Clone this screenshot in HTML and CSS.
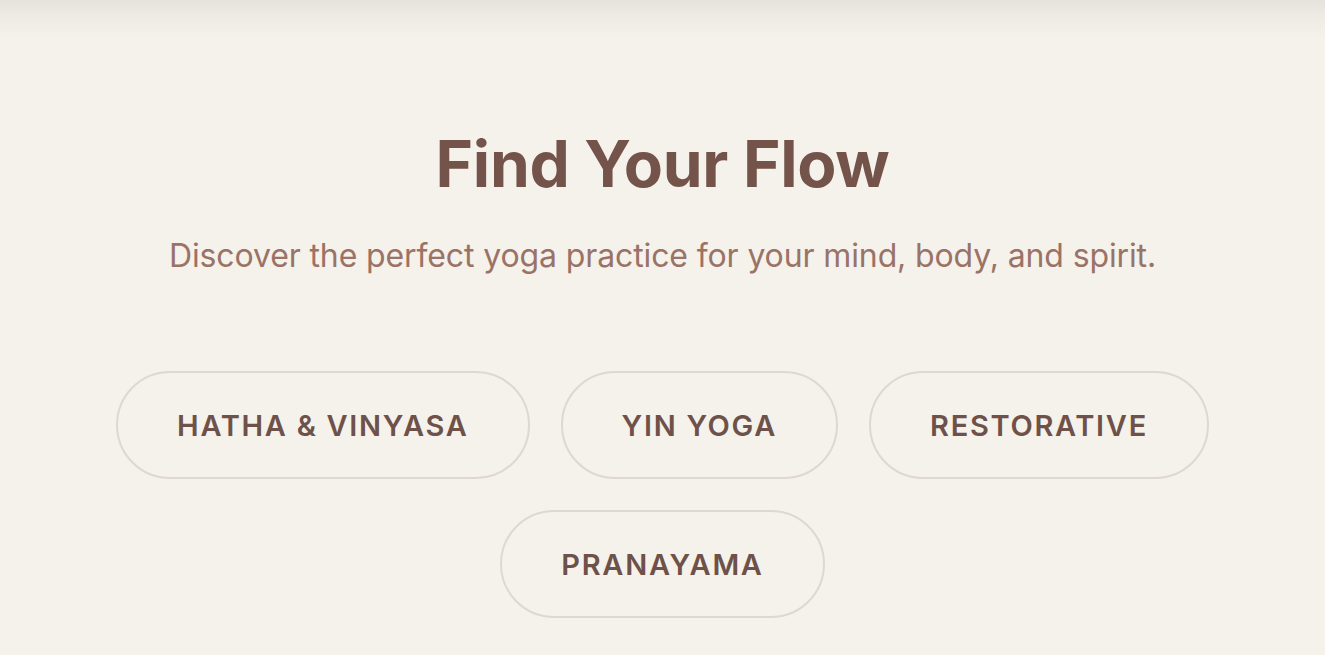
FILE: index.html
```html
<!DOCTYPE html>
<html lang="en">
<head>
<meta charset="utf-8">
<title>Find Your Flow</title>
<link rel="stylesheet" href="styles.css">
</head>
<body>
<div class="topshade"></div>
<section class="hero">
  <h1 class="title">Find Your Flow</h1>
  <p class="subtitle">Discover the perfect yoga practice for your mind, body, and spirit.</p>
  <div class="tabs">
    <button class="tab">HATHA &amp; VINYASA</button>
    <button class="tab">YIN YOGA</button>
    <button class="tab">RESTORATIVE</button>
    <button class="tab">PRANAYAMA</button>
  </div>
</section>
</body>
</html>
```
FILE: styles.css
```css
html, body {
  margin: 0;
  padding: 0;
}
body {
  background: #f5f1eb;
  font-family: Inter, "Noto Sans", sans-serif;
  height: 655px;
  overflow: hidden;
  position: relative;
}
.topshade {
  position: absolute;
  left: 0;
  top: 0;
  width: 100%;
  height: 40px;
  background: linear-gradient(to bottom, #e4e2dc 0%, #eeebe5 40%, #f5f1eb 100%);
}
.hero {
  display: flex;
  flex-direction: column;
  align-items: center;
  padding-top: 120px;
}
.title {
  margin: 0;
  font-size: 64px;
  font-weight: 700;
  color: #74544a;
  line-height: 88px;
  letter-spacing: -0.3px;
}
.subtitle {
  margin: 26px 0 0;
  font-size: 32px;
  font-weight: 400;
  color: #9a7366;
  line-height: 44px;
  letter-spacing: -0.12px;
}
.tabs {
  margin-top: 93px;
  display: flex;
  flex-wrap: wrap;
  justify-content: center;
  gap: 31px 31px;
  width: 1150px;
}
.tab {
  font-family: Inter, "Noto Sans", sans-serif;
  font-size: 29px;
  font-weight: 600;
  letter-spacing: 1.7px;
  color: #6e5149;
  background: transparent;
  border: 2px solid #dfd8ce;
  border-radius: 60px;
  height: 108px;
  padding: 0 59px;
}
```
